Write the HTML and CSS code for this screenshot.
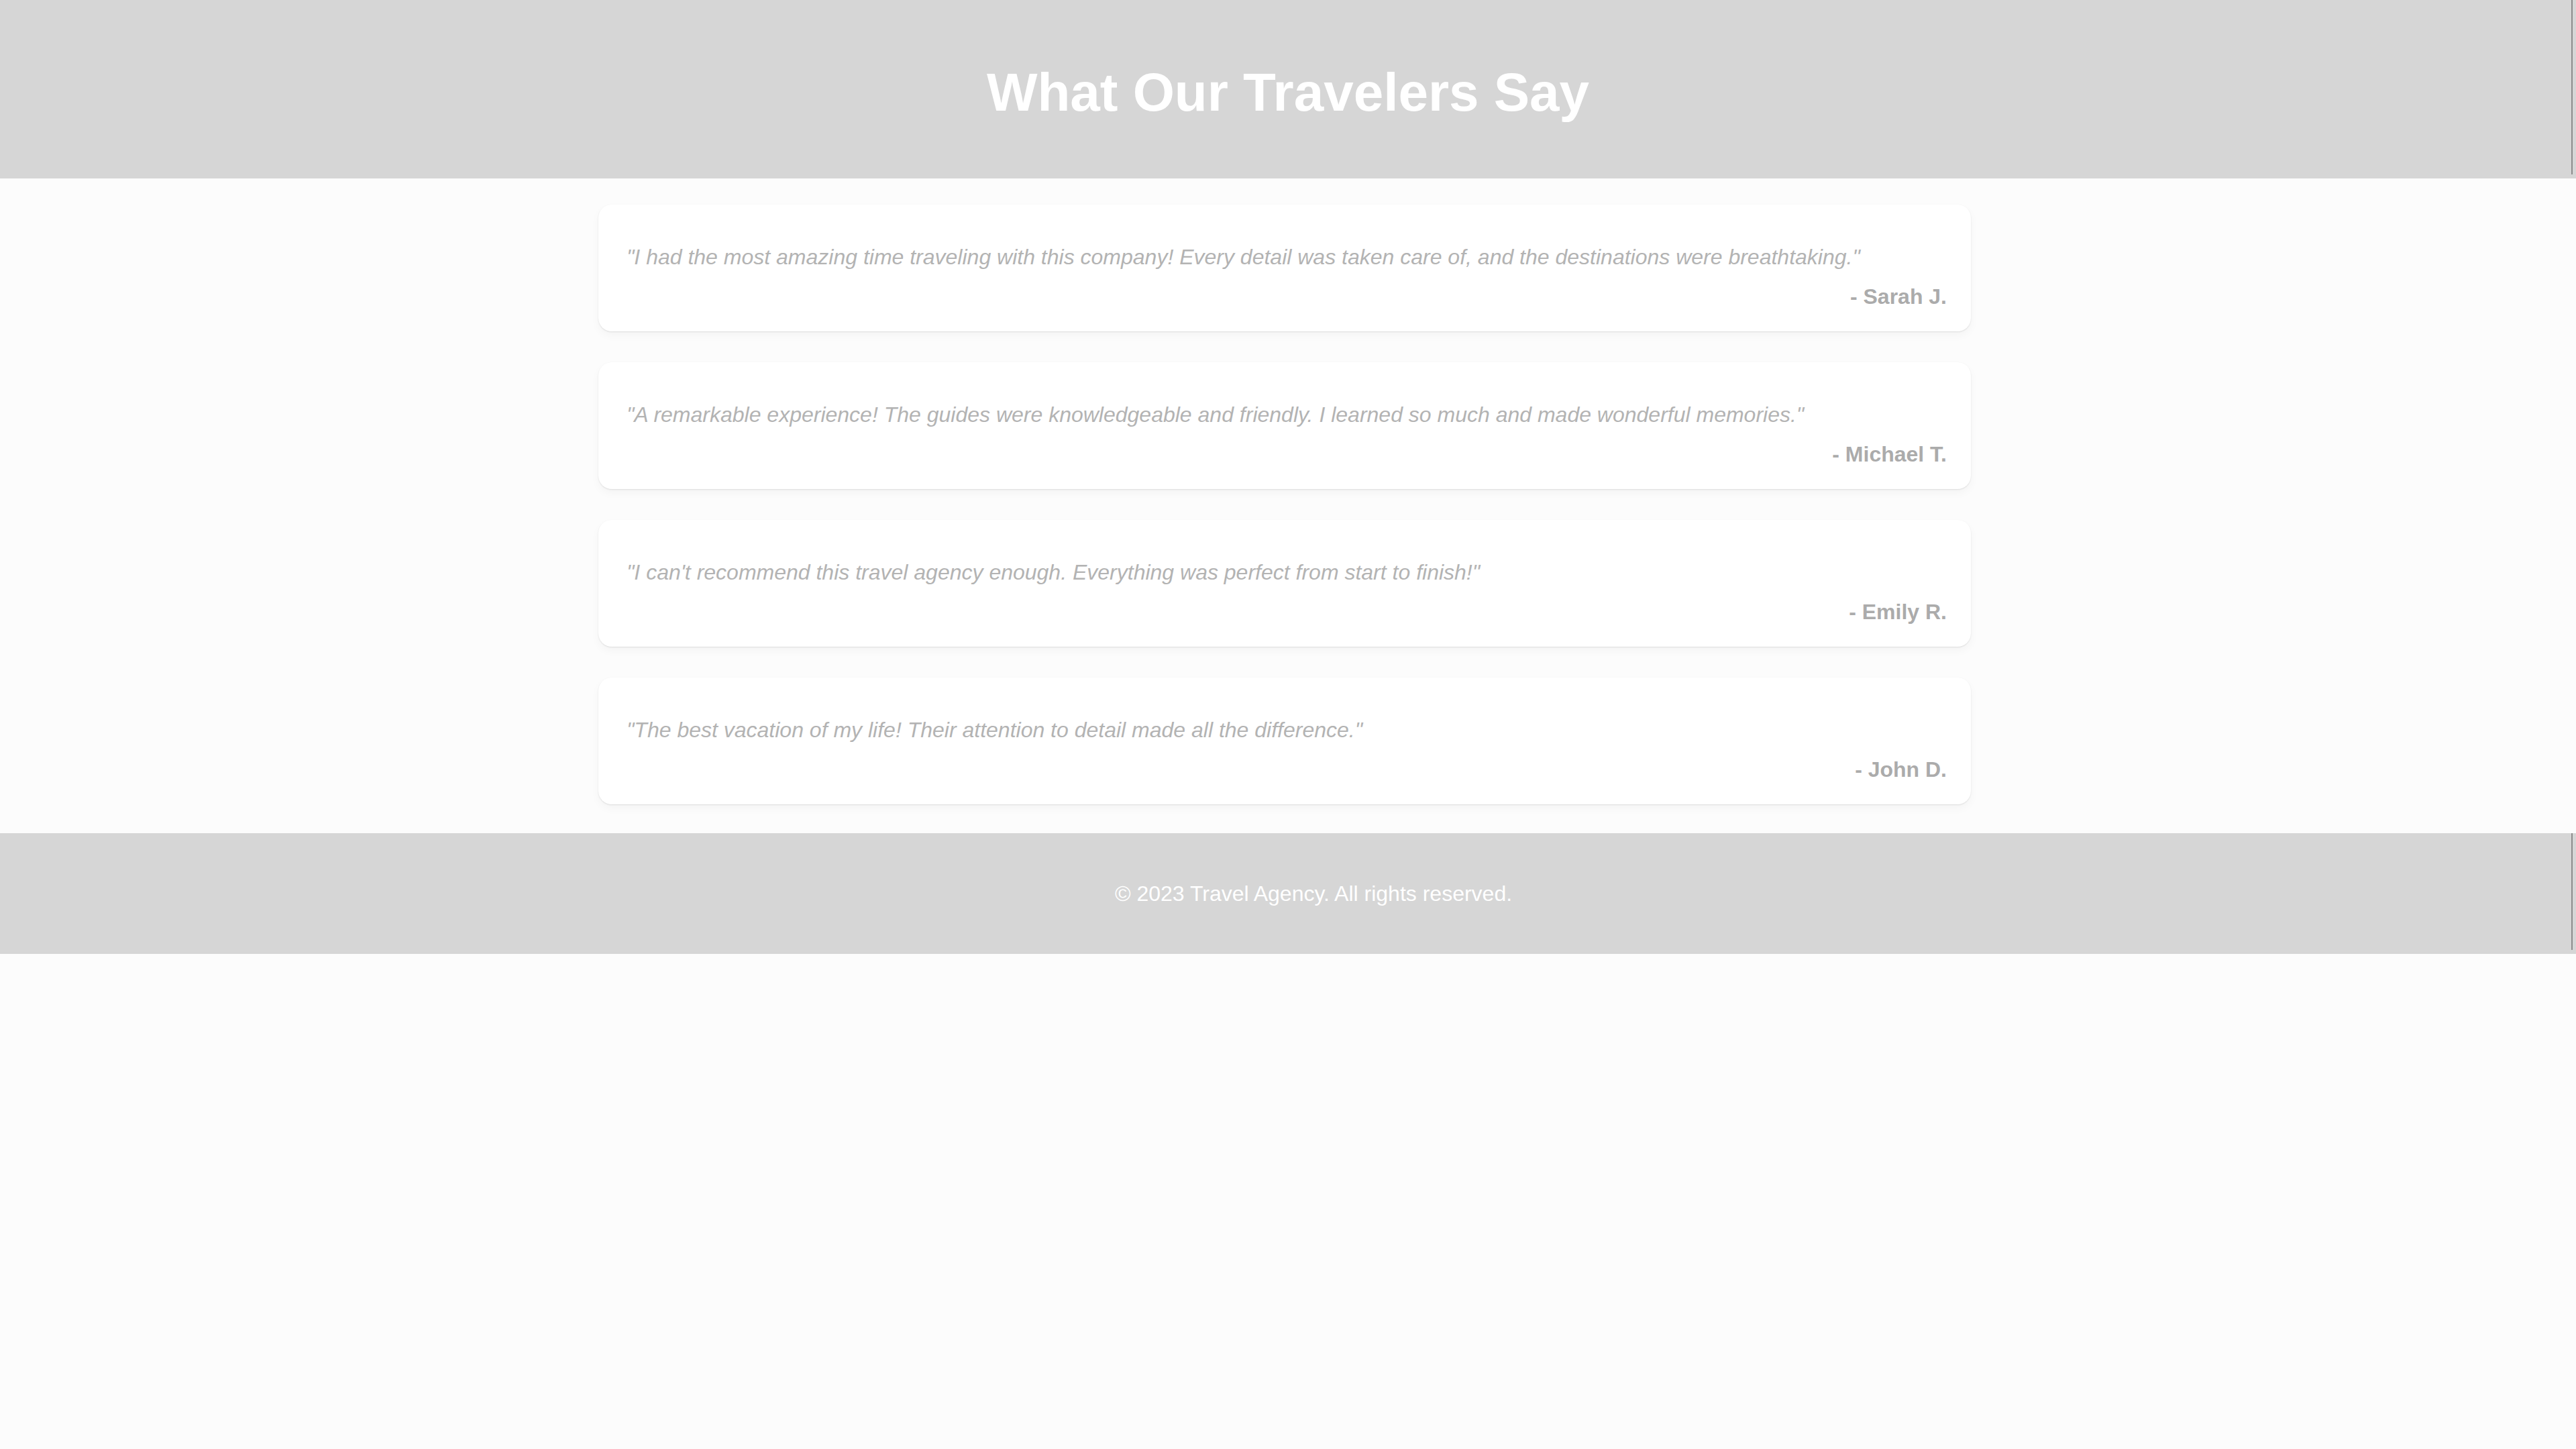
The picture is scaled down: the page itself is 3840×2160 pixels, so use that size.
FILE: index.html
```html
<!DOCTYPE html>
<html lang="en">
<head>
<meta charset="utf-8">
<title>What Our Travelers Say</title>
<link rel="stylesheet" href="styles.css">
</head>
<body>
<header class="site-header">
  <h1 class="site-title">What Our Travelers Say</h1>
</header>
<main class="testimonials">
  <article class="card">
    <p class="quote">"I had the most amazing time traveling with this company! Every detail was taken care of, and the destinations were breathtaking."</p>
    <p class="author">- Sarah J.</p>
  </article>
  <article class="card">
    <p class="quote">"A remarkable experience! The guides were knowledgeable and friendly. I learned so much and made wonderful memories."</p>
    <p class="author">- Michael T.</p>
  </article>
  <article class="card">
    <p class="quote">"I can't recommend this travel agency enough. Everything was perfect from start to finish!"</p>
    <p class="author">- Emily R.</p>
  </article>
  <article class="card">
    <p class="quote">"The best vacation of my life! Their attention to detail made all the difference."</p>
    <p class="author">- John D.</p>
  </article>
</main>
<footer class="site-footer">
  <p class="copyright">© 2023 Travel Agency. All rights reserved.</p>
</footer>
</body>
</html>
```

FILE: styles.css
```css
* { box-sizing: border-box; }

html, body {
  margin: 0;
  padding: 0;
  background: #fcfcfc;
  font-family: "Liberation Sans", Arial, sans-serif;
}

.site-header {
  position: relative;
  background: #d6d6d6;
  height: 266px;
  padding: 92px 0 0;
  text-align: center;
}

.site-header::after,
.site-footer::after {
  content: "";
  position: absolute;
  right: 5px;
  top: 0;
  bottom: 6px;
  width: 2px;
  background: #8c8c8c;
}

.site-title {
  margin: 0;
  font-size: 80px;
  line-height: 92px;
  font-weight: bold;
  color: #ffffff;
}

.testimonials {
  display: flex;
  flex-direction: column;
  align-items: center;
  gap: 46px;
  padding: 39px 10px 43px 0;
}

.card {
  width: 2046px;
  height: 189px;
  background: #ffffff;
  border-radius: 20px;
  padding: 37px 36px 0 42px;
  box-shadow: 0 1px 2px rgba(0, 0, 0, 0.10), 0 6px 14px rgba(0, 0, 0, 0.035);
}

.quote {
  margin: 23px 0 22px;
  font-size: 32px;
  line-height: 37px;
  font-style: italic;
  color: #b3b3b3;
}

.author {
  margin: 0;
  font-size: 32px;
  line-height: 37px;
  font-weight: bold;
  text-align: right;
  color: #ababab;
}

.site-footer {
  position: relative;
  background: #d6d6d6;
  height: 180px;
  display: flex;
  align-items: center;
  justify-content: center;
  padding-left: 76px;
}

.copyright {
  margin: 0;
  font-size: 32px;
  line-height: 37px;
  color: #ffffff;
}
```
